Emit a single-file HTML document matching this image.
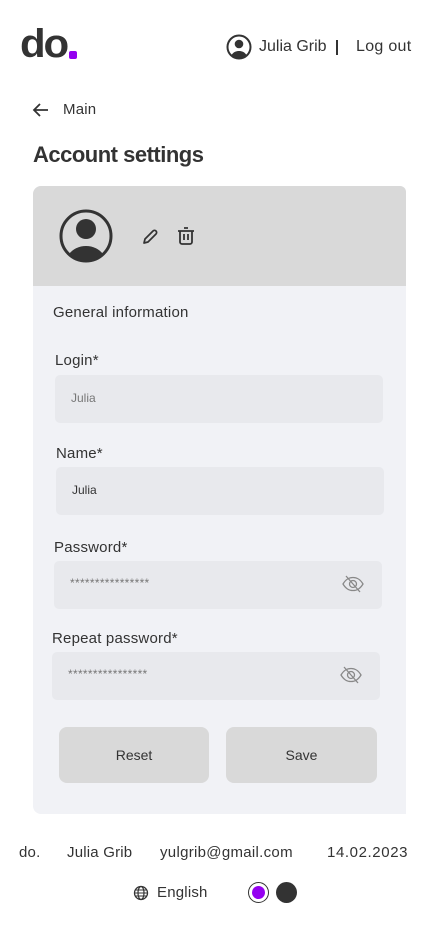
<!DOCTYPE html>
<html><head><meta charset="utf-8"><style>
*{margin:0;padding:0;box-sizing:border-box}
body{width:430px;height:932px;background:#fff;font-family:"Liberation Sans",sans-serif;color:#333;position:relative;overflow:hidden}
.a{position:absolute}
.t{font-size:15px;color:#333;white-space:nowrap;letter-spacing:0.2px}
.inp{position:absolute;background:#e8e9ed;border-radius:5px;height:48px}
.inp span{position:absolute;left:16px;top:16px;font-size:12px;color:#777}
.btn{position:absolute;background:#d9d9d9;border-radius:8px;height:56px;top:727px;font-size:14px;color:#333;text-align:center;line-height:56px}
</style></head><body>
<div class="a" style="left:20px;top:22px;font-size:40px;font-weight:bold;color:#333;letter-spacing:-2px;line-height:44px;transform:scaleX(1.05);transform-origin:left">do</div>
<div class="a" style="left:69px;top:51px;width:8px;height:8px;background:#9400f0;border-radius:2px"></div>
<svg class="a" style="left:226px;top:34px" width="26" height="26" viewBox="0 0 26 26"><circle cx="13" cy="13" r="11.5" fill="none" stroke="#333" stroke-width="2"/><circle cx="13" cy="10" r="4.3" fill="#333"/><path d="M5.5 21c2-3 4.5-4 7.5-4s5.5 1 7.5 4a11 11 0 0 1-15 0z" fill="#333"/></svg>
<div class="a t" style="left:259px;top:38px;font-size:16px;letter-spacing:0">Julia Grib</div>
<div class="a" style="left:336px;top:40px;width:1.5px;height:15px;background:#333"></div>
<div class="a t" style="left:356px;top:38px;font-size:16px;letter-spacing:0.3px">Log out</div>
<svg class="a" style="left:32px;top:101px" width="18" height="18" viewBox="0 0 18 18"><path d="M16 9H2M8 3L2 9l6 6" fill="none" stroke="#333" stroke-width="1.8"/></svg>
<div class="a t" style="left:63px;top:101px">Main</div>
<div class="a" style="left:33px;top:142px;font-size:22px;font-weight:bold;color:#333;letter-spacing:-0.5px">Account settings</div>
<div class="a" style="left:33px;top:186px;width:373px;height:628px;background:#f1f2f6;border-radius:8px 6px 0 8px;overflow:hidden">
<div style="height:100px;background:#d9d9d9"></div></div>
<svg class="a" style="left:59px;top:209px" width="54" height="54" viewBox="0 0 54 54"><circle cx="27" cy="27" r="25" fill="none" stroke="#333" stroke-width="3"/><circle cx="27" cy="20" r="10" fill="#333"/><path d="M10 45c4-5 10-8 17-8s13 3 17 8a25 25 0 0 1-34 0z" fill="#333"/></svg>
<svg class="a" style="left:141px;top:227px" width="18" height="18" viewBox="0 0 18 18"><path d="M3 16l1-4 8-8a2 2 0 0 1 3 3l-8 8z" fill="none" stroke="#333" stroke-width="1.7" stroke-linejoin="round"/></svg>
<svg class="a" style="left:176px;top:226px" width="20" height="20" viewBox="0 0 20 20"><path d="M2 5h16M8 2h4M4 5v11a2 2 0 0 0 2 2h8a2 2 0 0 0 2-2V5M8 8v6M12 8v6" fill="none" stroke="#333" stroke-width="1.8"/></svg>
<div class="a t" style="left:53px;top:304px">General information</div>
<div class="a t" style="left:55px;top:352px">Login*</div>
<div class="inp" style="left:55px;top:375px;width:328px"><span>Julia</span></div>
<div class="a t" style="left:56px;top:445px">Name*</div>
<div class="inp" style="left:56px;top:467px;width:328px"><span style="color:#333">Julia</span></div>
<div class="a t" style="left:54px;top:539px">Password*</div>
<div class="inp" style="left:54px;top:561px;width:328px"><span style="top:15px;letter-spacing:0.3px">****************</span>
<svg class="a" style="left:288px;top:13px" width="22" height="20" viewBox="0 0 22 20"><path d="M1 10c3-5 6-6.5 10-6.5S18 5 21 10c-3 5-6 6.5-10 6.5S4 15 1 10z" fill="none" stroke="#888" stroke-width="1.3"/><circle cx="11" cy="10" r="3.5" fill="none" stroke="#888" stroke-width="1.3"/><path d="M4 2l14 16" stroke="#888" stroke-width="1.3"/></svg></div>
<div class="a t" style="left:52px;top:630px">Repeat password*</div>
<div class="inp" style="left:52px;top:652px;width:328px"><span style="top:15px;letter-spacing:0.3px">****************</span>
<svg class="a" style="left:288px;top:13px" width="22" height="20" viewBox="0 0 22 20"><path d="M1 10c3-5 6-6.5 10-6.5S18 5 21 10c-3 5-6 6.5-10 6.5S4 15 1 10z" fill="none" stroke="#888" stroke-width="1.3"/><circle cx="11" cy="10" r="3.5" fill="none" stroke="#888" stroke-width="1.3"/><path d="M4 2l14 16" stroke="#888" stroke-width="1.3"/></svg></div>
<div class="btn" style="left:59px;width:150px">Reset</div>
<div class="btn" style="left:226px;width:151px">Save</div>
<div class="a t" style="left:19px;top:844px">do.</div>
<div class="a t" style="left:67px;top:844px">Julia Grib</div>
<div class="a t" style="left:160px;top:844px;letter-spacing:0.3px">yulgrib@gmail.com</div>
<div class="a t" style="left:327px;top:844px;letter-spacing:0.6px">14.02.2023</div>
<svg class="a" style="left:133px;top:885px" width="16" height="16" viewBox="0 0 16 16"><circle cx="8" cy="8" r="6.5" fill="none" stroke="#333" stroke-width="1.3"/><ellipse cx="8" cy="8" rx="3" ry="6.5" fill="none" stroke="#333" stroke-width="1.2"/><path d="M1.5 8h13M2.5 5h11M2.5 11h11" stroke="#333" stroke-width="1.1"/></svg>
<div class="a t" style="left:157px;top:884px">English</div>
<div class="a" style="left:248px;top:882px;width:21px;height:21px;border-radius:50%;border:1.5px solid #333;background:#fff"></div>
<div class="a" style="left:252px;top:886px;width:13px;height:13px;border-radius:50%;background:#9400f0"></div>
<div class="a" style="left:276px;top:882px;width:21px;height:21px;border-radius:50%;background:#333"></div>
</body></html>
